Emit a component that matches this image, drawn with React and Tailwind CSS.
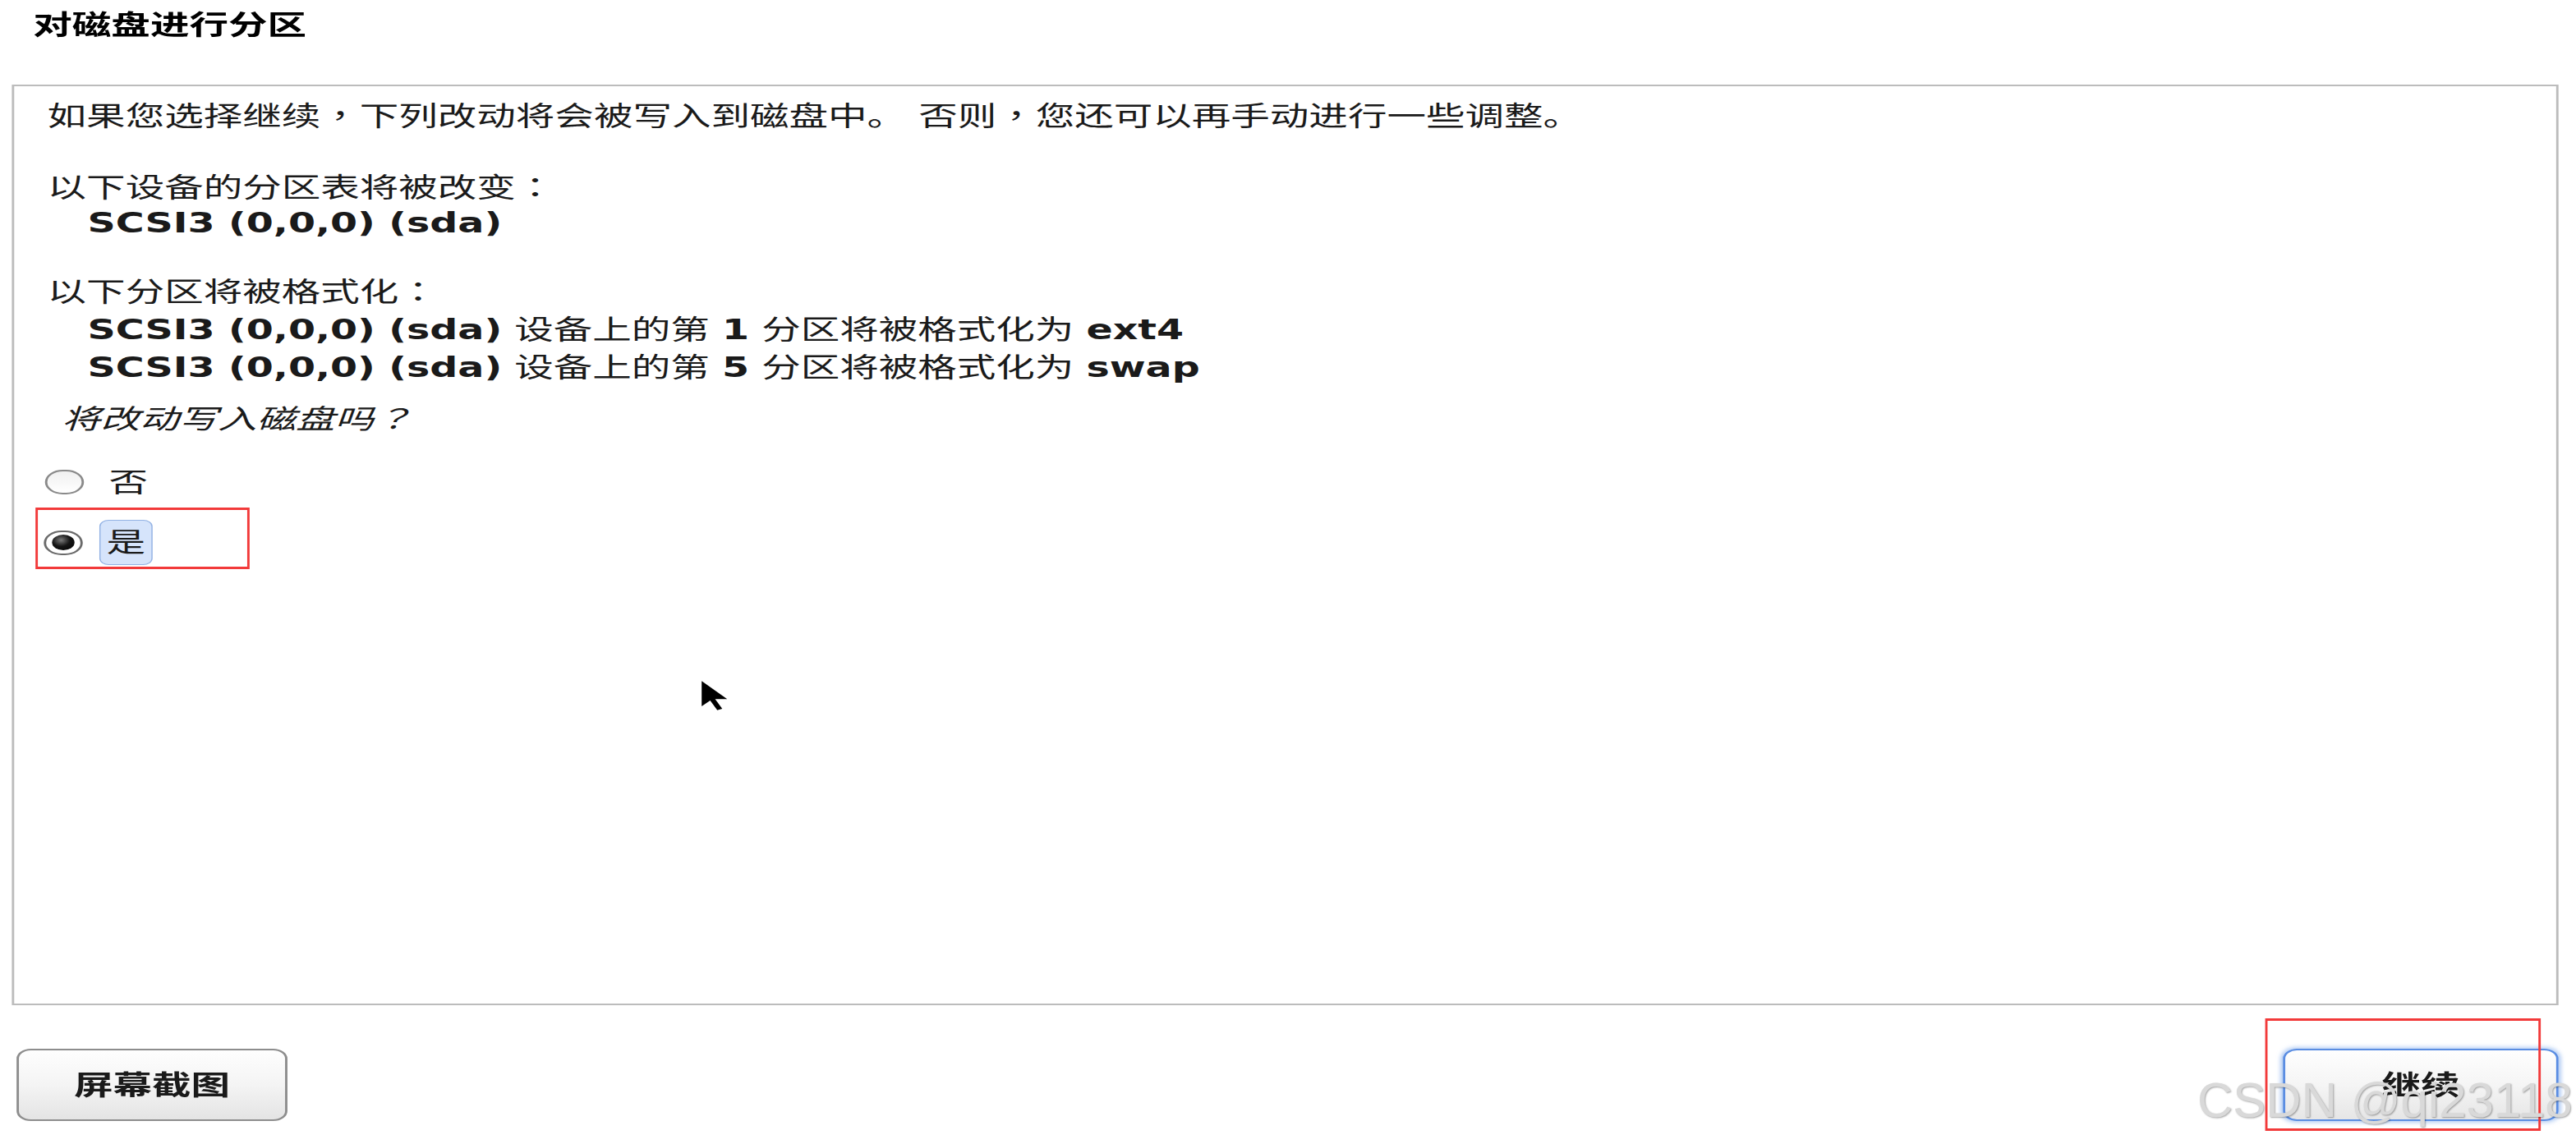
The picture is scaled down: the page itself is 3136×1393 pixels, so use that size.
import React from 'react';

// the screenshot is stretched sideways, so the page is laid out narrow and scaled on x
const fontStack = "font-['DejaVu_Sans','Noto_Sans_CJK_SC',sans-serif]";

// centred full-width punctuation, as in the installer's font (zero line-height so it does not push lines down)
const P = ({ children }) => (
    <span className="font-['Noto_Sans_CJK_TC',sans-serif] leading-[0px]">{children}</span>
);

const Radio = ({ checked }) => (
    checked ? (
        <span className="flex h-[30px] w-[33px] shrink-0 items-center justify-center rounded-full border-2 border-[#6a6a6a] bg-white">
            <span className="block h-[19px] w-[19px] rounded-full bg-[radial-gradient(circle_at_40%_35%,#7a7a7a_0%,#151515_45%,#000_100%)]" />
        </span>
    ) : (
        <span className="block h-[30px] w-[33px] shrink-0 rounded-full border-2 border-[#8a8a8a] bg-gradient-to-b from-[#f0f0f0] to-white" />
    )
);

const Cursor = () => (
    <svg width="24" height="38" viewBox="0 0 20 32" preserveAspectRatio="none">
        <path d="M1 1 L1 27 L7 21 L12 31 L15.5 29.5 L10.5 19.5 L19 19.5 Z" fill="#000" />
    </svg>
);

const FormatLine = ({ num, fs }) => (
    <div>
        <span className="font-bold">SCSI3 (0,0,0) (sda)</span>
        <span> 设备上的第 </span>
        <span className="font-bold">{num}</span>
        <span> 分区将被格式化为 </span>
        <span className="font-bold">{fs}</span>
    </div>
);

export default function App() {
    return (
        <div className={`relative h-[1393px] w-[3136px] overflow-hidden bg-white text-[#1a1a1a] ${fontStack}`}>
            <div className="relative w-[2178px] origin-top-left scale-x-[1.44] pt-[11px]">
                {/* header */}
                <div className="pl-[28px] text-[33px] font-bold leading-[40px] text-black">
                    对磁盘进行分区
                </div>

                {/* summary panel */}
                <div className="relative ml-[10px] mr-[15px] mt-[52px] h-[1121px] border-2 border-[#bcbcbc] bg-white pl-[28px] pt-[15px] text-[33px]">
                    <div className="leading-[44px]">
                        如果您选择继续<P>，</P>下列改动将会被写入到磁盘中。 否则<P>，</P>您还可以再手动进行一些调整。
                    </div>

                    <div className="mt-[43px] leading-[43px]">
                        <div>以下设备的分区表将被改变<P>：</P></div>
                        <div className="pl-[34px] font-bold">SCSI3 (0,0,0) (sda)</div>
                    </div>

                    <div className="mt-[40px] leading-[46px]">
                        <div>以下分区将被格式化<P>：</P></div>
                        <div className="pl-[34px]">
                            <FormatLine num="1" fs="ext4" />
                            <FormatLine num="5" fs="swap" />
                        </div>
                    </div>

                    <div className="mt-[18px] pl-[12px] italic leading-[44px]">
                        将改动写入磁盘吗<P>？</P>
                    </div>

                    <div className="ml-[-2px] mt-[32px] flex h-[44px] items-center gap-[21px]">
                        <Radio />
                        <span className="leading-none">否</span>
                    </div>

                    <div className="ml-[-10px] mt-[9px] flex h-[75px] w-[181px] items-center gap-[14px] border-x-2 border-y-[3px] border-[#f23a3a] pl-[5px] pt-[10px]">
                        <Radio checked />
                        <span className="flex h-[55px] items-center rounded-[8px] border border-[#93b2e4] bg-[#d6e4fb] px-[5px] leading-none">
                            是
                        </span>
                    </div>

                    <div className="absolute left-[580px] top-[723px]">
                        <Cursor />
                    </div>
                </div>

                {/* footer buttons */}
                <div className="mt-[53px] flex items-start justify-between pl-[14px] pr-[15px]">
                    <button className="flex h-[88px] w-[229px] items-center justify-center rounded-[12px] border-2 border-[#8d8d8d] bg-gradient-to-b from-[#fefefe] via-[#f4f4f4] to-[#e4e4e4] text-[33px] font-bold leading-none text-[#1a1a1a]">
                        屏幕截图
                    </button>
                    <button className="flex h-[88px] w-[233px] items-center justify-center rounded-[12px] border-2 border-[#5a8de2] bg-gradient-to-b from-[#fefefe] via-[#f5f5f5] to-[#e6e6e6] text-[33px] font-bold leading-none text-[#1a1a1a] shadow-[0_0_4px_2px_rgba(120,165,235,0.55)]">
                        继续
                    </button>
                </div>

                {/* annotation around the continue button */}
                <div className="absolute left-[1915px] top-[1240px] h-[137px] w-[233px] border-x-2 border-y-[3px] border-[#f23a3a]" />
            </div>

            {/* watermark */}
            <div className="absolute left-[2675px] top-[1310px] font-['Liberation_Sans',sans-serif] text-[60px] leading-none text-[#d9d9d9] [text-shadow:1px_1px_2px_rgba(0,0,0,0.35)]">
                CSDN @qi23118
            </div>
        </div>
    );
}
